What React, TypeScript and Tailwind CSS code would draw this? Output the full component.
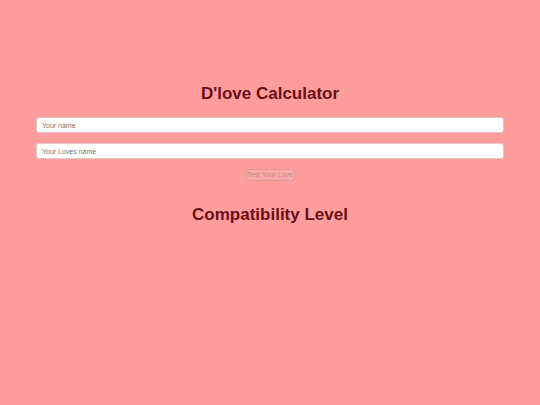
export default function App() {
  return (
    <div className="min-h-screen w-full bg-[#ff9d9d] px-[36px] pt-[84px] font-['Liberation_Sans',Arial,sans-serif]">
      <h1 className="text-center text-[17px] font-bold leading-[20px] text-[#6b0f16]">
        D'love Calculator
      </h1>
      <input
        type="text"
        placeholder="Your name"
        className="mt-[13px] block h-[16px] w-full rounded-[3px] border border-[#dcc8c8] bg-white pl-[5px] text-[7px] text-[#333] placeholder:text-[#757575] outline-none"
      />
      <input
        type="text"
        placeholder="Your Loves name"
        className="mt-[10px] block h-[16px] w-full rounded-[3px] border border-[#dcc8c8] bg-white pl-[5px] text-[7px] text-[#333] placeholder:text-[#757575] outline-none"
      />
      <button
        disabled
        className="mx-auto mt-[10px] block h-[12px] w-[49px] rounded-[3px] border border-[#d99a9a] bg-[#fba8a8] p-0 text-[7px] leading-[10px] text-[#c48c8c]"
      >
        Test Your Love
      </button>
      <h2 className="mt-[24px] text-center text-[17px] font-bold leading-[20px] text-[#6b0f16]">
        Compatibility Level
      </h2>
    </div>
  );
}
